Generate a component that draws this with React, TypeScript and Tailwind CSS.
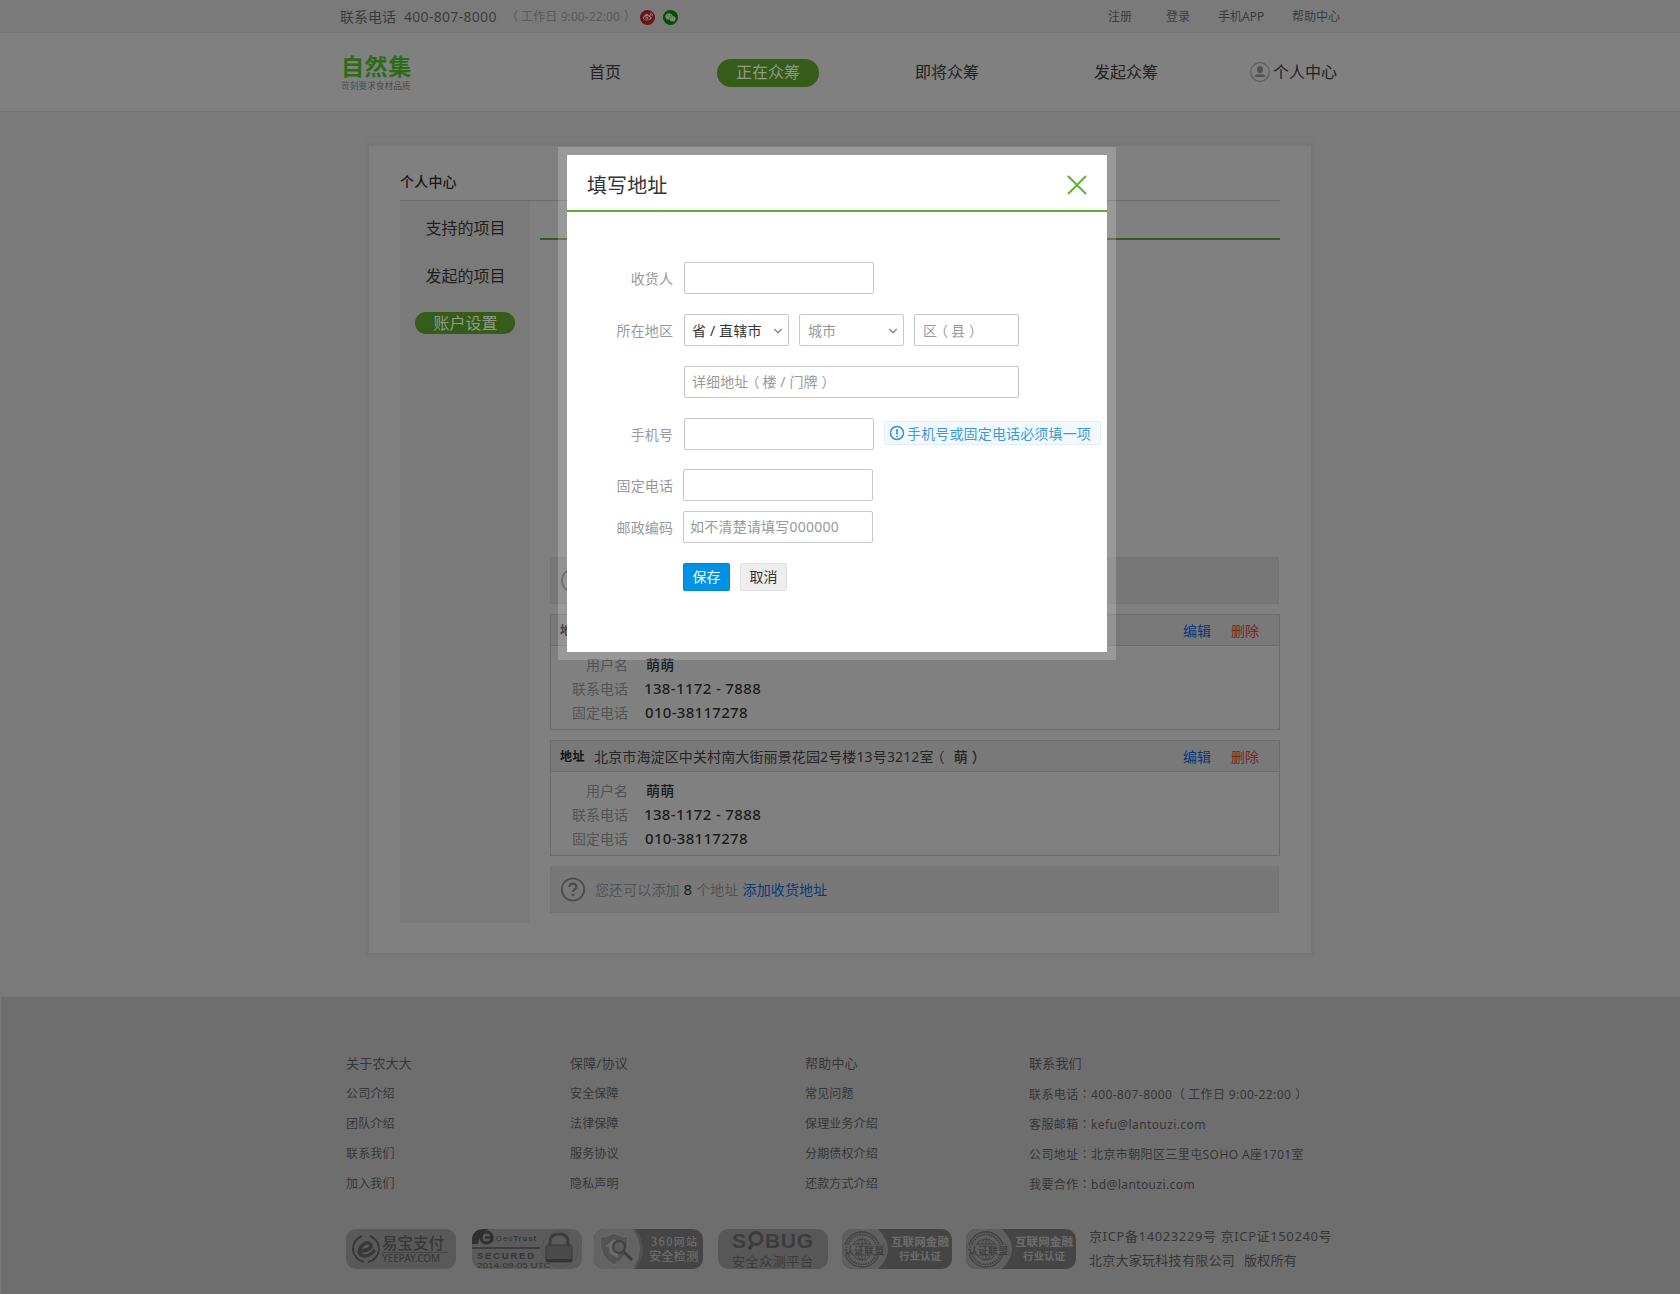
import React from 'react';
import { FaWeixin, FaWeibo } from 'react-icons/fa';

const Open = () => <span className="inline-block -translate-x-[3px]">（</span>;
const Close = () => <span className="inline-block translate-x-[4px]">）</span>;

function TopBar() {
  return (
    <div className="flex h-8 items-center bg-[#7a7a7a] pt-[2px] pl-[340px] leading-[30px] text-[#3c3c3c]">
      <span className="w-[64px] text-[14px]">联系电话</span>
      <span className="w-[103px] text-[14px] tracking-[0.3px]">400-807-8000</span>
      <span className="w-[133px] pl-[2px] text-[12px] tracking-[0.1px] text-[#595959]"><Open />工作日 9:00-22:00<Close /></span>
      <span className="flex h-[15px] w-[15px] items-center justify-center rounded-full bg-[#6d1210] text-[10px] text-[#858080]">
        <FaWeibo />
      </span>
      <span className="ml-2 flex h-[15px] w-[15px] items-center justify-center rounded-full bg-[#004f00] text-[11px] text-[#7d857d]">
        <FaWeixin />
      </span>
      <span className="ml-[430px] w-[58px] text-[12px]">注册</span>
      <span className="w-[52px] text-[12px]">登录</span>
      <span className="w-[74px] text-[12px]">手机APP</span>
      <span className="text-[12px]">帮助中心</span>
    </div>
  );
}

function Nav() {
  return (
    <div className="flex h-[80px] border-y border-t-[#777777] border-b-[#737373] bg-[#808080] pl-[341px] text-[16px] leading-[26px] text-[#222222]">
      <div className="w-[248px] pt-[19px]">
        <div className="h-[28px] text-[23px] leading-[28px] font-bold tracking-[0.6px] text-[#2d6c15]">自然集</div>
        <div className="h-[12px] text-[8.7px] leading-[12px] whitespace-nowrap text-[#4c4c4c]">苛刻要求食材品质</div>
      </div>
      <div className="mt-[26px] flex h-7 items-start">
        <span className="w-[128px]">首页</span>
        <span className="h-7 w-[102px] rounded-full bg-[#355c18] text-center text-[#8f9a88]">正在众筹</span>
        <span className="ml-[96px] w-[179px]">即将众筹</span>
        <span className="w-[156px]">发起众筹</span>
        <svg className="mt-[3px] h-5 w-5" viewBox="0 0 20 20">
          <circle cx="10" cy="10" r="9.3" fill="none" stroke="#5c5c5c" strokeWidth="1.2" />
          <ellipse cx="10" cy="7.6" rx="3" ry="3.7" fill="#535353" />
          <path d="M4.6 15 Q5 12.5 8.3 12 Q10 13 11.7 12 Q15 12.5 15.4 15 Z" fill="#535353" />
        </svg>
        <span className="ml-[3px]">个人中心</span>
      </div>
    </div>
  );
}

function Sidebar() {
  return (
    <div className="h-[722px] w-[130px] bg-[#7a7a7a] pt-[15px] text-center text-[16px] leading-6 text-[#1f1f1f]">
      <div className="h-12 pl-[1px]">支持的项目</div>
      <div className="h-12 pl-[1px]">发起的项目</div>
      <div className="mx-[15px] h-[22px] rounded-full bg-[#355c18] pl-[1px] leading-[22px] text-[#8f9a88]">账户设置</div>
    </div>
  );
}

function Tip({ children }: { children?: React.ReactNode }) {
  return (
    <div className="flex h-[47px] w-[729px] items-center border border-[#747474] bg-[#787878] pl-[10px] text-[14px] text-[#535353]">
      <svg className="mr-[9px] h-[25px] w-[25px]" viewBox="0 0 25 25" fill="none" stroke="#4d4d4d">
        <circle cx="12" cy="12.5" r="11.2" strokeWidth="1.8" />
        <path d="M8.4 9.8 Q8.500 6.6 12 6.6 Q15.500 6.8 15.500 9.6 Q15.500 11.2 13.7 12.2 Q12.1 13.2 12.1 15" strokeWidth="2.4" />
        <path d="M10.8 18h2.6" strokeWidth="2.4" />
      </svg>
      {children}
    </div>
  );
}

function Field({ label, children }: { label: string; children: React.ReactNode }) {
  return (
    <div className="flex h-6 items-center">
      <span className="w-[77px] text-right text-[14px] text-[#535353]">{label}</span>
      {children}
    </div>
  );
}

function AddressCard() {
  return (
    <div className="mb-[10px] h-[116px] w-[730px] border border-[#6c6c6c]">
      <div className="mb-[6px] flex h-[31px] items-center border-b border-[#6c6c6c] bg-[#797979] pl-[9px] text-[14px] leading-[31px] text-[#262626]">
        <span className="w-[34px] text-[12px] font-bold tracking-[0.4px] text-[#111111]">地址</span>
        <span className="tracking-[0.13px] whitespace-pre">北京市海淀区中关村南大街丽景花园2号楼13号3212室<Open /></span>
        <span className="ml-[6px] font-medium">萌<Close /></span>
        <span className="ml-auto text-[#0a387a]">编辑</span>
        <span className="mr-[20px] ml-[20px] text-[#832318]">删除</span>
      </div>
      <Field label="用户名">
        <span className="ml-[18px] text-[14px] font-medium tracking-[0.3px] text-[#1c1c1c]">萌萌</span>
      </Field>
      <Field label="联系电话">
        <span className="ml-[16px] text-[15px] font-medium tracking-[0.35px] text-[#1c1c1c]">138-1172 - 7888</span>
      </Field>
      <Field label="固定电话">
        <span className="ml-[17px] text-[15px] font-medium tracking-[0.3px] text-[#1c1c1c]">010-38117278</span>
      </Field>
    </div>
  );
}

function Account() {
  return (
    <div className="mt-[30px] ml-[365px] h-[815px] w-[950px] border-4 border-[#777777] bg-[#808080] pt-[23px] pl-[31px]">
      <div className="-ml-px h-[32px] w-[881px] pl-px text-[14px] text-[#181818]">
        <div className="h-[32px] border-b border-[#6a6a6a] leading-[26px] font-medium tracking-[0.2px]">个人中心</div>
      </div>
      <div className="flex">
        <Sidebar />
        <div className="ml-[10px] w-[740px]">
          <div className="mt-[37px] h-[2px] bg-[#355c18]" />
          <div className="mt-[317px] ml-[10px]">
            <Tip />
            <div className="h-[10px]" />
            <AddressCard />
            <AddressCard />
            <Tip>
              <span className="tracking-[0.1px]">您还可以添加</span>
              <span className="mx-[4px] text-[15px] text-[#1c1c1c]">8</span>
              <span className="tracking-[0.1px]">个地址</span>
              <span className="ml-[4px] tracking-[0.15px] text-[#083a78]">添加收货地址</span>
            </Tip>
          </div>
        </div>
      </div>
    </div>
  );
}

const Colon = () => <span className="font-['Noto_Sans_CJK_TC']" lang="zh-TW">：</span>;

function FooterCol({ cls, title, items }: { cls: string; title: string; items: React.ReactNode[] }) {
  return (
    <div className={cls}>
      <div className="h-[31px] text-[13px] leading-[30px] tracking-[0.2px]">{title}</div>
      {items.map((t, i) => (
        <div key={i} className="h-[30px] leading-[30px] whitespace-nowrap">{t}</div>
      ))}
    </div>
  );
}

function Alliance() {
  return (
    <div className="flex h-10 w-[110px] items-center overflow-hidden rounded-[10px] bg-[#454545]">
      <svg className="h-10 w-[48px] shrink-0" viewBox="0 0 48 40">
        <path d="M0 0H36Q56 20 36 40H0Z" fill="#5f5f5f" />
        <g fill="none" stroke="#434343">
          <circle cx="20" cy="20.5" r="17.5" strokeWidth="1.3" />
          <circle cx="20" cy="20.5" r="15" strokeWidth="2" strokeDasharray="1.6 1" />
          <circle cx="20" cy="20.5" r="10.5" />
          <ellipse cx="20" cy="20.5" rx="5" ry="10.5" />
          <path d="M20 10v21M11 15h18M11 26h18" />
        </g>
        <path d="M1 16H43V26H1Z" fill="#606060" stroke="#505050" strokeWidth="0.7" />
        <text x="2" y="24.600" fontSize="9.500" fontWeight="700" fill="#3f3f3f" fontFamily="Noto Sans CJK SC" textLength="40">认证联盟</text>
      </svg>
      <div className="w-[60px] text-center text-[11.6px] leading-[15px] font-bold whitespace-nowrap text-[#6c6c6c]">
        <div>互联网金融</div>
        <div className="text-[10.5px]">行业认证</div>
      </div>
    </div>
  );
}

function Badges() {
  return (
    <div className="flex h-10 pl-[346px]">
      <div className="flex h-10 w-[110px] items-center overflow-hidden rounded-[10px] bg-[#595959] pl-[4px] text-[#383838]">
        <svg className="h-8 w-[32px] shrink-0" viewBox="0 0 32 32" fill="none" stroke="#383838">
          <path d="M12 3A13.5 13.5 0 0 0 14 29" strokeWidth="2" />
          <path d="M20 3A13.5 13.5 0 0 1 18 29" strokeWidth="2" />
          <path d="M11 18Q22 17 21 12Q18 7 11.500 13Q7 20 12 22.500Q18 25 25 17" strokeWidth="3.4" />
        </svg>
        <div className="w-[66px] whitespace-nowrap">
          <div className="h-[18px] border-b border-[#444] text-[15.5px] leading-[17px] font-medium">易宝支付</div>
          <div className="text-[10px] leading-[11px] font-medium tracking-[-0.1px]">YEEPAY.COM</div>
        </div>
      </div>
      <svg className="ml-4 h-10 w-[110px] rounded-[10px] bg-[#5b5b5b]" viewBox="0 0 110 40" fontFamily="Liberation Sans" fill="#343434">
        <path d="M0 15V6Q4 0 10 0H17Q7 5 6 15Z" fill="#303030" />
        <circle cx="14.500" cy="8.500" r="5.500" fill="none" stroke="#303030" strokeWidth="3.200" />
        <path d="M13 8.500H20V13" fill="none" stroke="#303030" strokeWidth="2.500" />
        <text x="24" y="12" fontSize="7.800" textLength="40">Geo<tspan fontWeight="700">Trust</tspan></text>
        <path d="M0 18.300H68V19.800H0Z" />
        <text x="5" y="30" fontSize="9.500" fontWeight="700" textLength="57">SECURED</text>
        <text x="5" y="38.600" fontSize="7.800" textLength="74" lengthAdjust="spacingAndGlyphs">2014-09-05 UTC</text>
        <circle cx="88" cy="20" r="18" fill="none" stroke="#545454" />
        <path d="M78 17V13Q78 5 87 5Q96 5 96 13V17" fill="none" stroke="#3d3d3d" strokeWidth="3" />
        <rect x="74" y="16" width="26" height="17" rx="2" fill="#4a4a4a" stroke="#3b3b3b" />
        <path d="M74 30H100V33H74Z" fill="#353535" />
      </svg>
      <svg className="ml-3 h-10 w-[109px] rounded-[10px] bg-[#454545]" viewBox="0 0 109 40" fontFamily="Noto Sans CJK SC" fill="#6b6b6b">
        <path d="M0 0H42Q56 20 42 40H0Z" fill="#505050" />
        <path d="M0 0H39Q53 20 39 40H0Z" fill="#636363" />
        <path d="M20 4Q27 8 34 8Q35 29 20 36Q5 29 6 8Q13 8 20 4Z" fill="#535353" stroke="#6e6e6e" />
        <path d="M12 17 20 10 24 14V29L15 24V18Z" fill="#6c6c6c" />
        <circle cx="25" cy="18" r="6" fill="#5c5c5c" stroke="#424242" strokeWidth="2.200" />
        <path d="M30 23 38 31" stroke="#3e3e3e" strokeWidth="3" />
        <text x="57" y="16.500" fontSize="11" fontWeight="500" textLength="46">360网站</text>
        <text x="55" y="32" fontSize="12.300" fontWeight="500">安全检测</text>
      </svg>
      <svg className="ml-[15px] h-10 w-[110px] rounded-[10px] bg-[#575757]" viewBox="0 0 110 40" fill="#3c3c3c">
        <text x="14" y="19" fontSize="21" fontWeight="700" fontFamily="Liberation Sans">S</text>
        <circle cx="38" cy="9.500" r="6" fill="none" stroke="#3c3c3c" strokeWidth="3" />
        <path d="M34 16 31 20" stroke="#3c3c3c" strokeWidth="3.500" />
        <text x="47" y="19" fontSize="21" fontWeight="700" fontFamily="Liberation Sans" textLength="48">BUG</text>
        <text x="14" y="37" fontSize="13" fontFamily="Noto Sans CJK SC" textLength="81">安全众测平台</text>
      </svg>
      <div className="w-[14px]" />
      <Alliance />
      <div className="w-[14px]" />
      <Alliance />
      <div className="-mt-[5px] ml-[13px] text-[13px] leading-[24px] whitespace-nowrap">
        <div className="tracking-[0.62px]">京ICP备14023229号 京ICP证150240号</div>
        <div className="tracking-[0.27px]">北京大家玩科技有限公司<span className="ml-[9px]">版权所有</span></div>
      </div>
    </div>
  );
}

function Footer() {
  return (
    <div className="mt-[40px] h-[297px] border-l border-[#787878] bg-[#6e6e6e] pt-[51px] text-[12px] text-[#363636]">
      <div className="-ml-px flex h-[181px] pl-[346px]">
        <FooterCol cls="w-[224px] tracking-[0.15px]" title="关于农大大" items={['公司介绍', '团队介绍', '联系我们', '加入我们']} />
        <FooterCol cls="w-[235px] tracking-[0.15px]" title="保障/协议" items={['安全保障', '法律保障', '服务协议', '隐私声明']} />
        <FooterCol cls="w-[224px] tracking-[0.15px]" title="帮助中心" items={['常见问题', '保理业务介绍', '分期债权介绍', '还款方式介绍']} />
        <FooterCol
          cls="tracking-[0.4px]"
          title="联系我们"
          items={[
            <>联系电话<Colon />400-807-8000 <Open />工作日 9:00-22:00<Close /></>,
            <>客服邮箱<Colon />kefu@lantouzi.com</>,
            <>公司地址<Colon />北京市朝阳区三里屯SOHO A座1701室</>,
            <>我要合作<Colon />bd@lantouzi.com</>,
          ]}
        />
      </div>
      <div className="-ml-px">
        <Badges />
      </div>
    </div>
  );
}

const Chevron = () => (
  <svg className="mt-[2px] h-[10px] w-[10px]" viewBox="0 0 10 10" fill="none" stroke="#8a8a8a" strokeWidth="1.5">
    <path d="M1.300 3 5 6.700 8.700 3" />
  </svg>
);

const Label = ({ children }: { children?: React.ReactNode }) => (
  <span className="w-[106px] text-right tracking-[0.1px] text-[#999999]">{children}</span>
);

function Modal() {
  return (
    <div className="absolute top-[147px] left-[558px] h-[513px] w-[558px] border-x-[9px] border-y-8 border-white/20 bg-white bg-clip-padding text-[14px]">
      <div className="flex h-[57px] items-center justify-between border-b-2 border-[#5fae2d] pr-[20px] pl-[20px]">
        <span className="mt-[6px] text-[20px] tracking-[0.1px] text-[#333333]">填写地址</span>
        <svg className="mt-[4px] h-5 w-5" viewBox="0 0 20 20" stroke="#62b12c" strokeWidth="2">
          <path d="M1 1 19 19M19 1 1 19" />
        </svg>
      </div>
      <div className="mt-[50px] flex h-8 items-center">
        <Label>收货人</Label>
        <div className="ml-[11px] h-8 w-[190px] rounded-[2px] border border-[#c8c8c8]" />
      </div>
      <div className="mt-[20px] flex h-8 items-center text-[#999999]">
        <Label>所在地区</Label>
        <div className="ml-[11px] flex h-8 w-[105px] items-center justify-between rounded-[2px] border border-[#c8c8c8] pr-[5px] pl-[7px] tracking-[0.15px] whitespace-nowrap text-[#333333]">
          省 / 直辖市
          <Chevron />
        </div>
        <div className="ml-[10px] flex h-8 w-[105px] items-center justify-between rounded-[2px] border border-[#c8c8c8] pr-[5px] pl-[8px]">
          城市
          <Chevron />
        </div>
        <div className="ml-[10px] flex h-8 w-[105px] items-center rounded-[2px] border border-[#c8c8c8] pl-[8px]">
          区<Open />县<Close />
        </div>
      </div>
      <div className="mt-[20px] flex h-8 items-center">
        <div className="ml-[117px] h-8 w-[335px] rounded-[2px] border border-[#c8c8c8] pl-[7px] leading-[30px] tracking-[0.1px] text-[#999999]">
          详细地址<Open />楼 / 门牌<Close />
        </div>
      </div>
      <div className="mt-[20px] flex h-8 items-center">
        <Label>手机号</Label>
        <div className="ml-[11px] h-8 w-[190px] rounded-[2px] border border-[#c8c8c8]" />
        <div className="-mt-[2px] ml-[10px] flex h-6 w-[217px] items-center rounded-[2px] border border-[#e0effb] bg-[#f1f9ff] pl-[4px] tracking-[0.15px] whitespace-nowrap text-[#3e9ad6]">
          <svg className="mr-[2px] h-4 w-4" viewBox="0 0 16 16" fill="none" stroke="#3b8fd0">
            <circle cx="8" cy="8" r="6.500" strokeWidth="1.500" />
            <path d="M8 4V9.500M8 10.800V12.300" strokeWidth="1.700" />
          </svg>
          手机号或固定电话必须填一项
        </div>
      </div>
      <div className="mt-[19px] flex h-8 items-center">
        <Label>固定电话</Label>
        <div className="ml-[10px] h-8 w-[190px] rounded-[2px] border border-[#c8c8c8]" />
      </div>
      <div className="mt-[10px] flex h-8 items-center">
        <Label>邮政编码</Label>
        <div className="ml-[10px] h-8 w-[190px] rounded-[2px] border border-[#c8c8c8] pl-[6px] leading-[30px] tracking-[0.22px] text-[#999999]">如不清楚请填写000000</div>
      </div>
      <div className="mt-[20px] ml-[116px] flex leading-[26px]">
        <div className="h-7 w-[47px] rounded-[2px] border border-[#0084d6] bg-[#0092e7] text-center text-white">保存</div>
        <div className="ml-[10px] h-7 w-[47px] rounded-[2px] border border-[#e0e0e0] bg-[#eeeeee] text-center text-[#333333]">取消</div>
      </div>
    </div>
  );
}

export default function App() {
  return (
    <div lang="zh-CN" className="relative h-[1294px] w-[1680px] overflow-hidden bg-[#7a7a7a] font-['Noto_Sans','Noto_Sans_CJK_SC',sans-serif]">
      <TopBar />
      <Nav />
      <Account />
      <Footer />
      <Modal />
    </div>
  );
}
